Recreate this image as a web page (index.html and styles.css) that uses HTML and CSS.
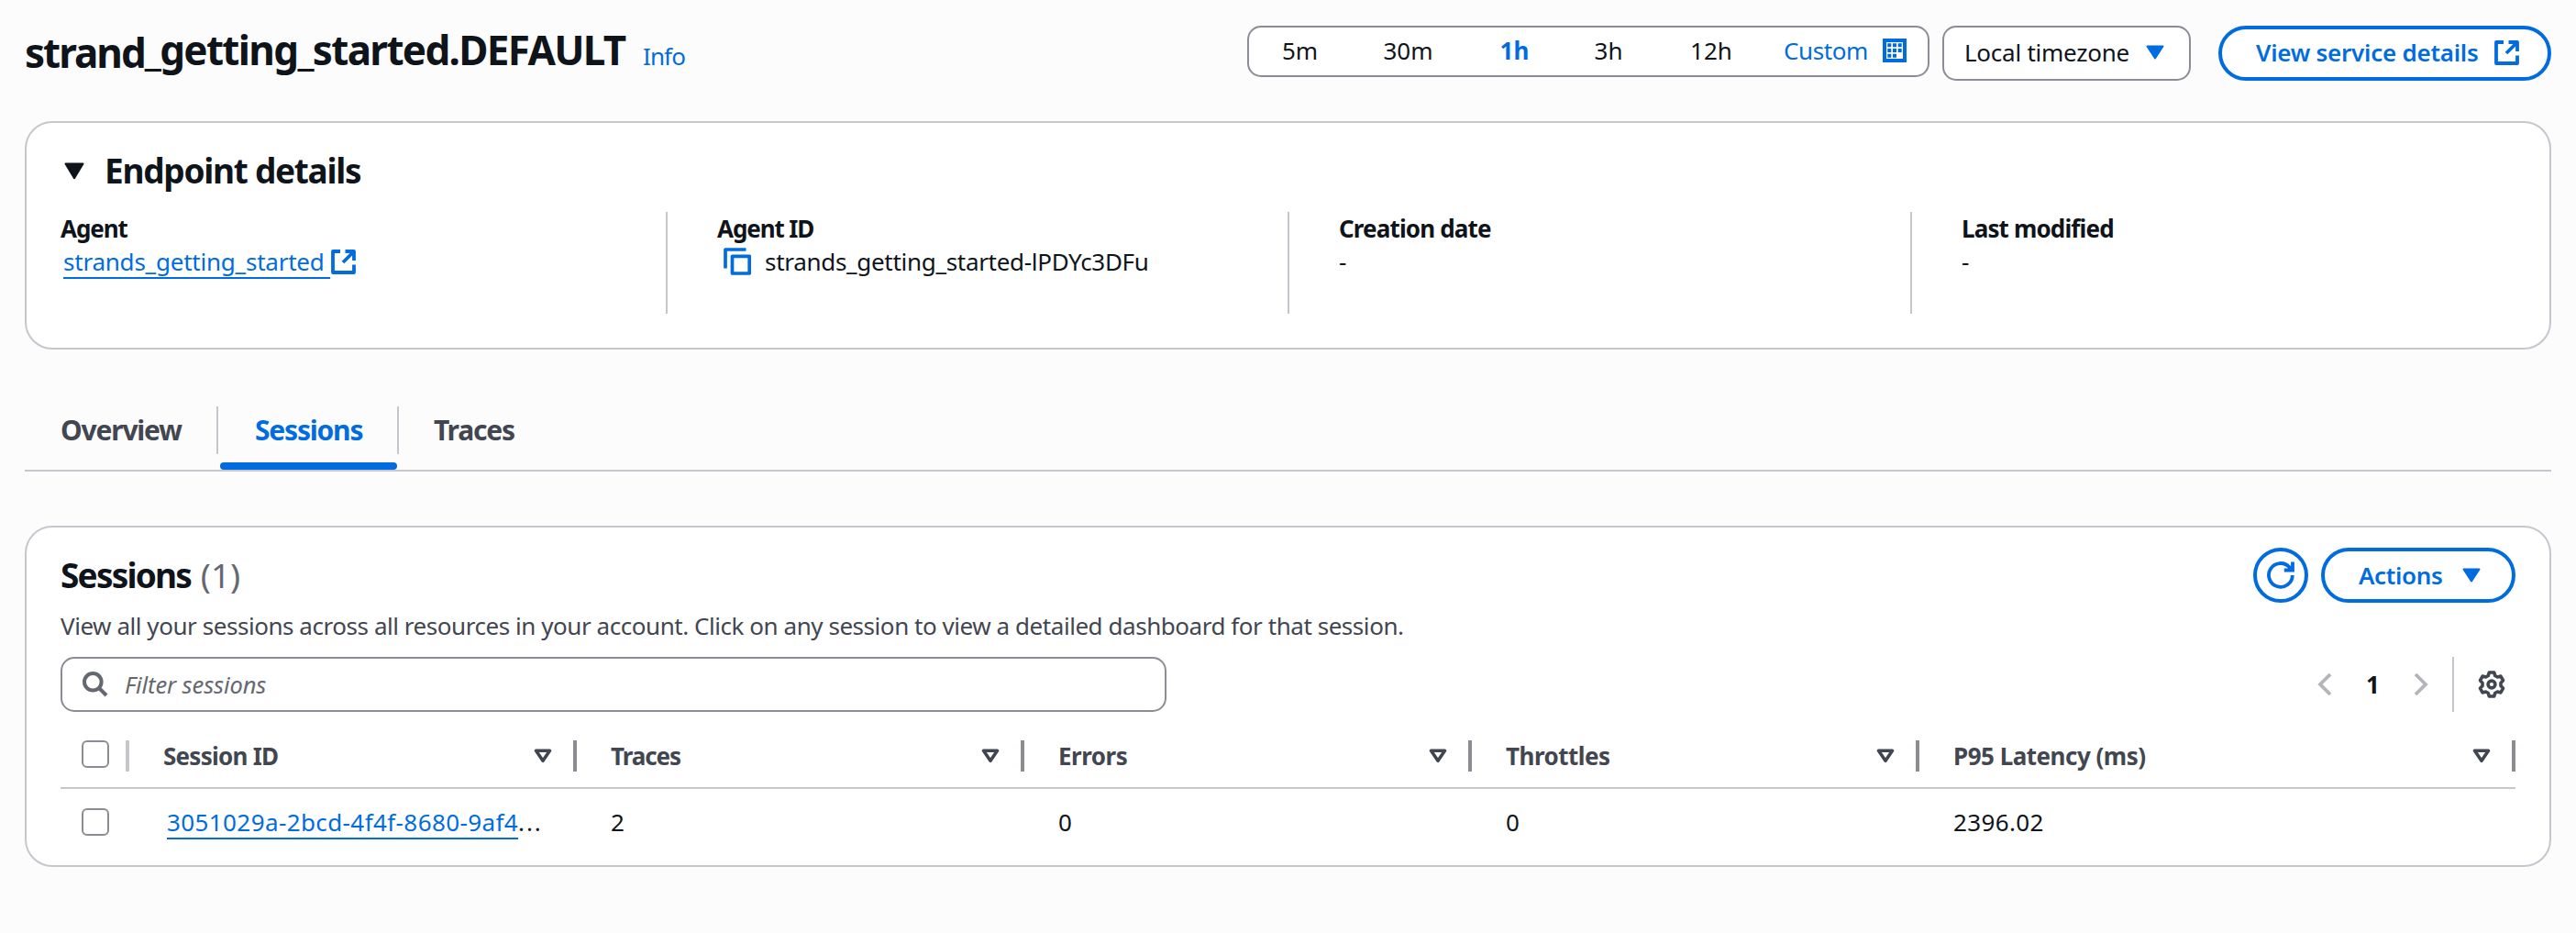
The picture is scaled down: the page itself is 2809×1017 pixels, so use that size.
FILE: index.html
```html
<!DOCTYPE html>
<html lang="en">
<head>
<meta charset="utf-8">
<title>strand_getting_started.DEFAULT</title>
<link rel="stylesheet" href="styles.css">
</head>
<body>
<svg class="defs" width="0" height="0" aria-hidden="true">
  <symbol id="external" viewBox="0 0 27 27">
    <path d="M10 2H2V25H25V16.5M15.5 2H25V12M24.5 2.5L13 14" fill="none" stroke="currentColor" stroke-width="3.8" stroke-linejoin="round"/>
  </symbol>
  <symbol id="caret" viewBox="0 0 20 16">
    <path d="M1.5 1.5H18.500L10 14.500Z" fill="currentColor" stroke="currentColor" stroke-width="2" stroke-linejoin="round"/>
  </symbol>
  <symbol id="sort" viewBox="0 0 20 16">
    <path d="M2.500 2.200H17.500L10 13.300Z" fill="none" stroke="currentColor" stroke-width="3.600" stroke-linejoin="round"/>
  </symbol>
</svg>

<header class="page-header">
  <h1 class="page-title"><span class="title-lead">strand</span><span class="title-rest">_getting_started.DEFAULT</span></h1>
  <a class="info">Info</a>
  <div class="controls">
    <div class="segments">
      <span>5m</span><span>30m</span><span class="selected">1h</span><span>3h</span><span>12h</span>
      <span class="custom">Custom
        <svg width="26" height="26" viewBox="0 0 26 26"><rect x="2" y="2" width="22" height="22" fill="#fff" stroke="currentColor" stroke-width="4"/><path d="M5.300 5.300h4v4h-4zM11 5.300h4v4h-4zM16.700 5.300h4v4h-4zM5.300 11h4v4h-4zM11 11h4v4h-4zM16.700 11h4v4h-4zM5.300 16.700h4v4h-4zM11 16.700h4v4h-4z" fill="currentColor"/></svg>
      </span>
    </div>
    <div class="select"><span>Local timezone</span><svg class="caret"><use href="#caret"/></svg></div>
    <a class="button details-button"><span>View service details</span><svg class="external"><use href="#external"/></svg></a>
  </div>
</header>

<section class="card endpoint">
  <h2 class="endpoint-title"><svg width="22" height="19" viewBox="0 0 22 19"><path d="M1.500 1.500H20.500L11 17.200Z" fill="currentColor" stroke="currentColor" stroke-width="2" stroke-linejoin="round"/></svg><span>Endpoint details</span></h2>
  <dl class="columns">
    <div class="column">
      <dt class="w-agent">Agent</dt>
      <dd class="agent-link"><a class="link">strands_getting_started&nbsp;</a><svg class="external"><use href="#external"/></svg></dd>
    </div>
    <div class="column">
      <dt class="w-agent">Agent ID</dt>
      <dd class="agent-id"><svg width="30" height="30" viewBox="0 0 30 30" fill="none" stroke="#006ce0" stroke-width="3.700"><path d="M2 22.500V2H24.500" stroke-linejoin="round"/><rect x="9.500" y="9.300" width="18.700" height="18.700" stroke-linejoin="round"/></svg><span>strands_getting_started-lPDYc3DFu</span></dd>
    </div>
    <div class="column"><dt>Creation date</dt><dd>-</dd></div>
    <div class="column"><dt>Last modified</dt><dd>-</dd></div>
  </dl>
</section>

<nav class="tabs">
  <a class="tab overview"><span>Overview</span></a>
  <a class="tab active"><span>Sessions</span></a>
  <a class="tab traces"><span>Traces</span></a>
</nav>

<section class="card sessions">
  <div class="sessions-header">
    <h2>Sessions <span class="count">(1)</span></h2>
    <div class="actions">
      <a class="button refresh"><svg width="30" height="30" viewBox="0 0 30 30" fill="none" stroke="currentColor" stroke-width="3.800"><path d="M27.800 15A12.900 12.900 0 1 1 24.500 6.300L27 9.400M28 .5V9.500H18.800"/></svg></a>
      <a class="button actions-button"><span>Actions</span><svg class="caret"><use href="#caret"/></svg></a>
    </div>
  </div>
  <p class="description">View all your sessions across all resources in your account. Click on any session to view a detailed dashboard for that session.</p>
  <div class="toolbar">
    <div class="filter">
      <svg width="28" height="28" viewBox="0 0 28 28" fill="none" stroke="#656871" stroke-width="4"><circle cx="11.300" cy="11.300" r="9.300"/><path d="M18 18L26 26"/></svg>
      <span>Filter sessions</span>
    </div>
    <div class="pagination">
      <svg width="16" height="26" viewBox="0 0 16 26"><path d="M14 2L3 13L14 24" fill="none" stroke="#b4b4bb" stroke-width="3.800"/></svg>
      <b>1</b>
      <svg width="16" height="26" viewBox="0 0 16 26"><path d="M2 2L13 13L2 24" fill="none" stroke="#b4b4bb" stroke-width="3.800"/></svg>
      <span class="settings"><svg width="30" height="30" viewBox="0 0 30 30" fill="none" stroke="#424650" stroke-width="3.600" stroke-linejoin="round"><circle cx="15" cy="15" r="3.900"/><path d="M12.300 2H17.700L18.700 5.500L21.400 7L24.900 6.100L27.500 10.700L25 13.400V16.600L27.500 19.300L24.900 23.900L21.400 23L18.700 24.500L17.700 28H12.300L11.300 24.500L8.600 23L5.100 23.900L2.500 19.300L5 16.600V13.400L2.500 10.700L5.100 6.100L8.600 7L11.300 5.500Z"/></svg></span>
    </div>
  </div>
  <table class="table">
    <colgroup><col class="c-check"><col class="c-data"><col class="c-data"><col class="c-data"><col class="c-data"><col></colgroup>
    <thead>
      <tr>
        <th class="check"><div class="head"><i class="box"></i></div></th>
        <th><div class="head"><span>Session ID</span><svg class="sort"><use href="#sort"/></svg></div></th>
        <th><div class="head"><span class="h-traces">Traces</span><svg class="sort"><use href="#sort"/></svg></div></th>
        <th><div class="head"><span class="h-loose">Errors</span><svg class="sort"><use href="#sort"/></svg></div></th>
        <th><div class="head"><span class="h-loose">Throttles</span><svg class="sort"><use href="#sort"/></svg></div></th>
        <th><div class="head"><span class="h-loose">P95 Latency (ms)</span><svg class="sort"><use href="#sort"/></svg></div></th>
      </tr>
    </thead>
    <tbody>
      <tr>
        <td class="check"><i class="box"></i></td>
        <td class="id"><a class="link">3051029a-2bcd-4f4f-8680-9af4</a><span class="dots">...</span></td>
        <td>2</td>
        <td>0</td>
        <td>0</td>
        <td>2396.02</td>
      </tr>
    </tbody>
  </table>
</section>
</body>
</html>
```
FILE: styles.css
```css
* { box-sizing: border-box; }

body {
  margin: 0;
  padding: 0 27px;
  background: #fcfcfd;
  color: #0f141a;
  font: 400 26px/36px "Noto Sans", sans-serif;
}

h1, h2, p, dl, dt, dd { margin: 0; }
svg { display: block; flex: none; }
.defs { position: absolute; }
.external { width: 27px; height: 27px; color: #006ce0; }
.caret { width: 20px; height: 16px; color: #006ce0; }
.sort { width: 20px; height: 16px; }

.link {
  color: #006ce0;
  text-decoration: underline 2px;
  text-underline-offset: 7px;
  text-decoration-skip-ink: none;
}

/* Page header */
.page-header {
  display: flex;
  align-items: flex-start;
  height: 132px;
  padding-top: 24px;
}
.page-title {
  width: 674px;
  font-size: 44px;
  font-weight: 700;
  line-height: 60px;
  white-space: nowrap;
}
.title-lead { letter-spacing: -2px; vertical-align: -3px; }
.title-rest { letter-spacing: -1.66px; }
.info {
  padding-top: 19px;
  color: #006ce0;
  letter-spacing: -0.9px;
}
.controls {
  display: flex;
  align-items: flex-start;
  margin: 4px 0 0 auto;
}
.segments {
  display: grid;
  grid-template-columns: 111px 125px 107px 98px 126px 1fr;
  align-items: center;
  width: 744px;
  height: 56px;
  padding-bottom: 2px;
  margin-right: 14px;
  border: 2px solid #8c8c94;
  border-radius: 15px;
  background: #fff;
  text-align: center;
}
.selected { color: #006ce0; font-weight: 700; }
.custom {
  display: flex;
  align-items: center;
  gap: 16px;
  padding-left: 16px;
  color: #006ce0;
  letter-spacing: -0.41px;
}
.select {
  display: flex;
  align-items: center;
  justify-content: space-between;
  width: 271px;
  height: 60px;
  margin-right: 30px;
  padding: 0 27px 2px 22px;
  border: 2px solid #8c8c94;
  border-radius: 15px;
  background: #fff;
  letter-spacing: -0.25px;
}
.button {
  display: flex;
  align-items: center;
  height: 60px;
  border: 4px solid #006ce0;
  border-radius: 30px;
  background: #fff;
  color: #006ce0;
  font-weight: 600;
}
.details-button {
  justify-content: space-between;
  width: 363px;
  padding: 0 31px 2px 37px;
  letter-spacing: -0.25px;
}

/* Cards */
.card {
  border: 2px solid #c6c6cd;
  border-radius: 30px;
  background: #fff;
}
.endpoint { height: 249px; padding: 34px 0 0 37px; }
.endpoint-title {
  display: flex;
  align-items: center;
  gap: 22px;
  height: 36px;
  margin-bottom: 27px;
  padding-left: 4px;
  font-size: 37px;
  font-weight: 700;
  letter-spacing: -1.28px;
}
.columns { display: grid; grid-template-columns: 660px 678px 679px 1fr; height: 111px; }
.column + .column { padding-left: 54px; border-left: 2px solid #c6c6cd; }
dt { font-weight: 700; letter-spacing: -0.85px; }
.w-agent { letter-spacing: -1.1px; }
.agent-link { display: flex; align-items: center; gap: 1px; padding-left: 3px; letter-spacing: -0.22px; }
.agent-id { display: flex; align-items: center; gap: 15px; padding-left: 7px; letter-spacing: -0.3px; }

/* Tabs */
.tabs {
  display: flex;
  height: 133px;
  padding-top: 62px;
  border-bottom: 2px solid #c6c6cd;
  color: #424650;
  font-size: 30px;
  font-weight: 700;
}
.tab { height: 52px; line-height: 52px; letter-spacing: -1.2px; }
.overview { width: 211px; padding-left: 39px; margin-right: 2px; border-right: 2px solid #c6c6cd; }
.active { width: 193px; height: 69px; color: #006ce0; }
.active span { display: block; height: 61px; padding-left: 38px; }
.active::after {
  content: "";
  display: block;
  height: 8px;
  border-radius: 4px;
  background: #006ce0;
}
.traces { padding-left: 38px; border-left: 2px solid #c6c6cd; }

/* Sessions */
.sessions { height: 372px; margin-top: 59px; padding: 22px 37px 0; }
.sessions-header { display: flex; justify-content: space-between; height: 60px; }
.sessions-header h2 {
  font-size: 37px;
  font-weight: 700;
  line-height: 60px;
  letter-spacing: -1.8px;
}
.count { margin-left: 3px; color: #656871; font-weight: 400; letter-spacing: 0; }
.actions { display: flex; gap: 14px; }
.refresh { justify-content: center; width: 60px; }
.actions-button {
  justify-content: space-between;
  width: 212px;
  padding: 0 34px 0 37px;
  letter-spacing: -0.35px;
}
.description {
  margin-top: 7px;
  height: 52px;
  color: #424650;
  letter-spacing: -0.45px;
}
.toolbar { display: flex; justify-content: space-between; height: 60px; }
.filter {
  display: flex;
  align-items: center;
  gap: 17px;
  width: 1206px;
  padding-left: 22px;
  border: 2px solid #8c8c94;
  border-radius: 15px;
  color: #656871;
  font-style: italic;
  letter-spacing: -0.7px;
}
.filter span { margin-left: 1px; letter-spacing: 0; font-size: 25.5px; letter-spacing: -0.1px; }
.pagination { display: flex; align-items: center; }
.pagination b { width: 89px; text-align: center; }
.settings {
  display: flex;
  align-items: center;
  height: 60px;
  margin-left: 26px;
  padding: 0 11px 0 26px;
  border-left: 2px solid #c6c6cd;
}

/* Table */
.table { width: 100%; table-layout: fixed; border-collapse: collapse; }
.c-check { width: 75px; }
.c-data { width: 488px; }
th { padding: 31px 0 17px; border-bottom: 2px solid #c6c6cd; text-align: left; color: #424650; font-weight: 700; }
.head {
  display: flex;
  align-items: center;
  justify-content: space-between;
  height: 34px;
  padding: 0 23px 0 37px;
  border-right: 4px solid #8c8c94;
  letter-spacing: -0.75px;
}
.h-traces { letter-spacing: -1.06px; }
.h-loose { letter-spacing: -0.5px; }
.check .head { align-items: flex-start; padding: 0 0 0 23px; border-color: #c6c6cd; }
.box {
  display: block;
  width: 30px;
  height: 30px;
  border: 2px solid #8c8c94;
  border-radius: 6px;
  background: #fff;
}
td { height: 72px; padding: 0 0 0 37px; letter-spacing: 0.36px; }
td.check { padding-left: 23px; }
td.id { padding-left: 41px; letter-spacing: 0.4px; white-space: nowrap; }
.dots { letter-spacing: 1.8px; }
```
